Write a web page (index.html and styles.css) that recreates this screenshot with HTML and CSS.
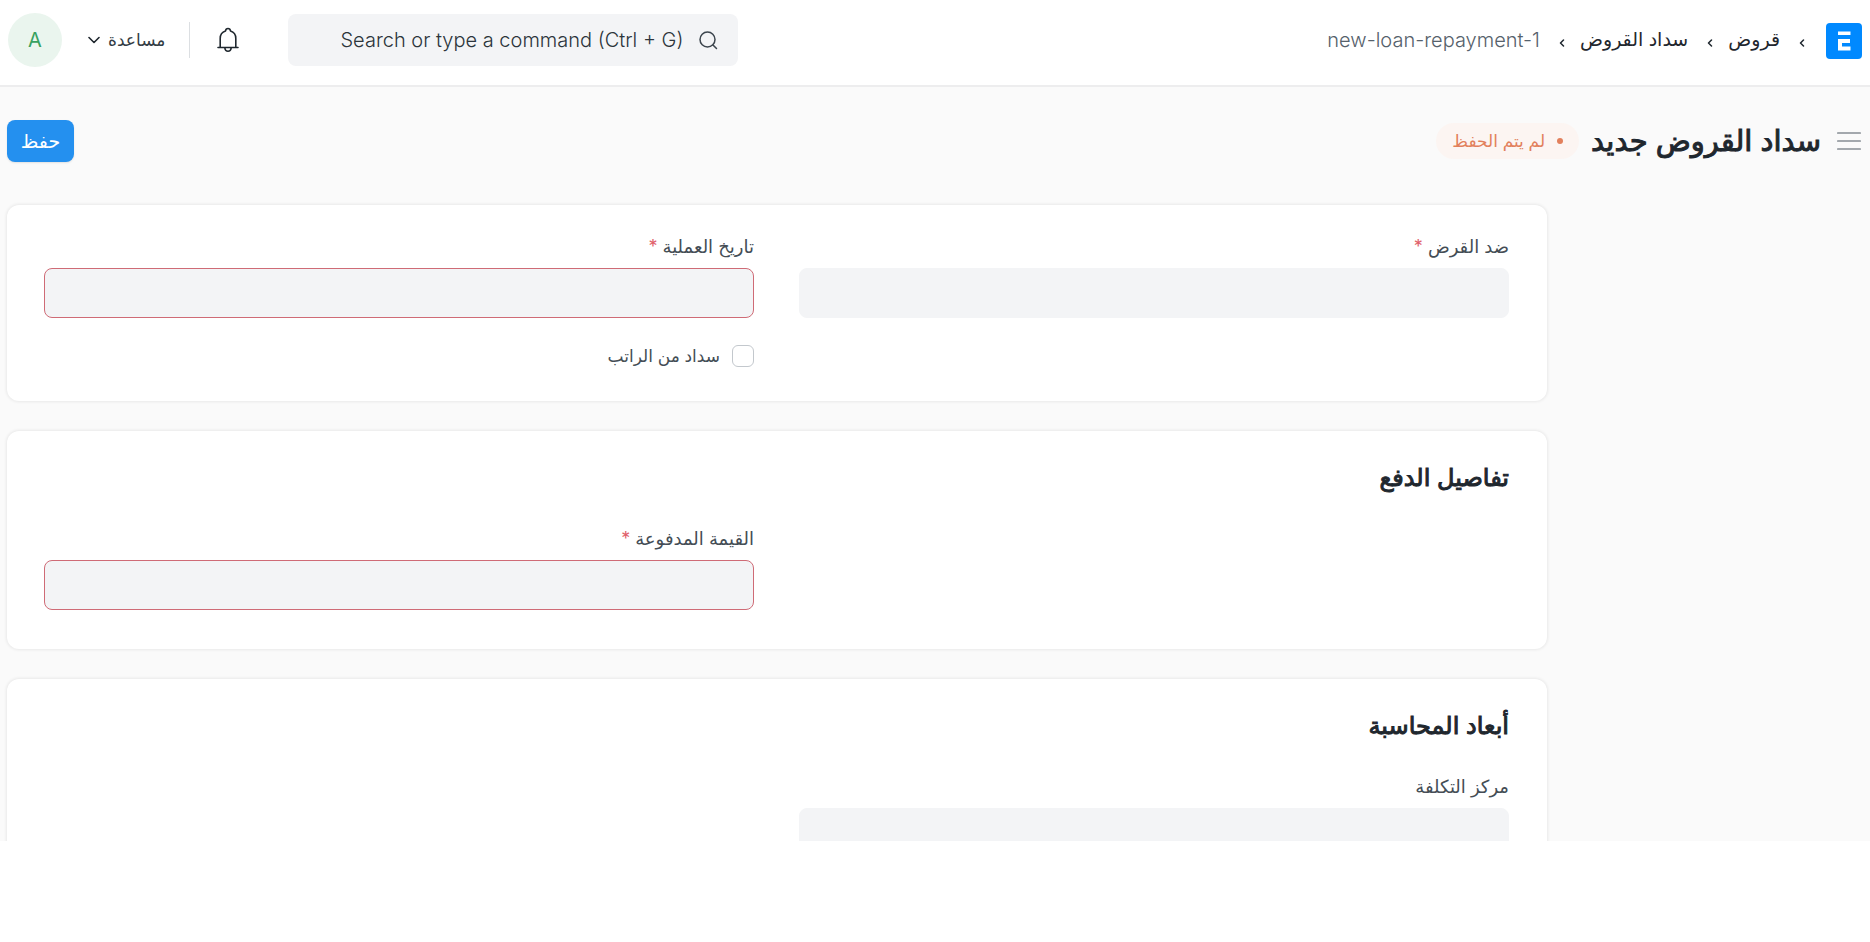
FILE: index.html
```
<!doctype html>
<html lang="ar" dir="rtl">

<head>
    <meta charset="utf-8">
    <meta name="viewport" content="width=device-width, initial-scale=1">
    <title>سداد القروض جديد</title>
    <link rel="stylesheet" href="styles.css">
</head>

<body>
    <div class="app">
        <header class="navbar">
            <a class="logo" href="#" aria-label="ERPNext">
                <svg width="36" height="36" viewBox="0 0 36 36">
                    <rect width="36" height="36" rx="4" fill="#0089ff" />
                    <path d="M12 8.500h12.500v3.500H12zM12 16h12v4h-8v3.500h8.500v4H12z" fill="#fff" />
                </svg>
            </a>
            <nav class="breadcrumbs">
                <svg class="sep" width="6" height="8" viewBox="0 0 6 8"><path d="M4.500 1L1.500 4l3 3" /></svg>
                <a href="#">قروض</a>
                <svg class="sep" width="6" height="8" viewBox="0 0 6 8"><path d="M4.500 1L1.500 4l3 3" /></svg>
                <a href="#">سداد القروض</a>
                <svg class="sep" width="6" height="8" viewBox="0 0 6 8"><path d="M4.500 1L1.500 4l3 3" /></svg>
                <a class="current" href="#" dir="ltr">new-loan-repayment-1</a>
            </nav>
            <div class="search">
                <svg width="20" height="20" viewBox="0 0 20 20">
                    <circle cx="9.500" cy="9.500" r="7.500" />
                    <path d="M15 15l3.500 3.500" />
                </svg>
                <input type="text" aria-label="Search" placeholder="Search or type a command (Ctrl + G)">
            </div>
            <button type="button" class="bell" aria-label="الإشعارات">
                <svg width="22" height="26" viewBox="0 0 22 26">
                    <path d="M1 20.500h20M3.200 20.500V11.500c0-4 2.200-6.600 5.300-7.500C8.700 2.400 9.600 1.500 11 1.500S13.300 2.400 13.500 4c3.100.9 5.300 3.500 5.300 7.500v9M7.800 21c.3 2.200 1.500 3.300 3.200 3.300s2.900-1.100 3.200-3.300" />
                </svg>
            </button>
            <span class="divider"></span>
            <button type="button" class="help">
                مساعدة
                <svg width="12" height="8" viewBox="0 0 12 8"><path d="M1 1.500l5 5 5-5" /></svg>
            </button>
            <a class="avatar" href="#">A</a>
        </header>

        <div class="page-head">
            <button type="button" class="menu-toggle" aria-label="القائمة">
                <svg width="24" height="20" viewBox="0 0 24 20"><path d="M1 2h22M1 10h22M1 18h22" /></svg>
            </button>
            <h1>سداد القروض جديد</h1>
            <span class="indicator">لم يتم الحفظ</span>
            <button type="submit" form="loanForm" class="btn-save">حفظ</button>
        </div>

        <main class="layout">
            <form id="loanForm" class="form">
                <section class="card">
                    <div class="columns">
                        <div class="column">
                            <label for="loan">ضد القرض <span class="reqd">*</span></label>
                            <input type="text" id="loan" class="control">
                        </div>
                        <div class="column">
                            <label for="date">تاريخ العملية <span class="reqd">*</span></label>
                            <input type="text" id="date" class="control has-error">
                            <div class="check">
                                <input type="checkbox" id="salary">
                                <label for="salary">سداد من الراتب</label>
                            </div>
                        </div>
                    </div>
                </section>

                <section class="card">
                    <h2>تفاصيل الدفع</h2>
                    <div class="columns">
                        <div class="column"></div>
                        <div class="column">
                            <label for="amount">القيمة المدفوعة <span class="reqd">*</span></label>
                            <input type="text" id="amount" class="control has-error">
                        </div>
                    </div>
                </section>

                <section class="card">
                    <h2>أبعاد المحاسبة</h2>
                    <div class="columns">
                        <div class="column">
                            <label for="cost">مركز التكلفة</label>
                            <input type="text" id="cost" class="control">
                        </div>
                        <div class="column"></div>
                    </div>
                </section>
            </form>
        </main>
    </div>
</body>

</html>
```
FILE: styles.css
```
* {
    box-sizing: border-box;
}

body {
    margin: 0;
    background: #fff;
    color: #1f272e;
    font-family: Inter, "DejaVu Sans", sans-serif;
    font-size: 17px;
}

button,
input {
    font-family: inherit;
}

button {
    border: none;
    background: none;
    padding: 0;
    cursor: pointer;
}

a {
    color: inherit;
    text-decoration: none;
}

svg {
    display: block;
    fill: none;
    stroke-linecap: round;
    stroke-linejoin: round;
}

.app {
    height: calc(100vh - 101px);
    overflow: hidden;
    background: #fafafa;
}

/* navbar */
.navbar {
    display: flex;
    align-items: center;
    height: 87px;
    padding: 0 8px 5px;
    background: #fff;
    border-bottom: 2px solid #ededee;
}

.logo {
    margin-top: 2px;
}

.breadcrumbs {
    display: flex;
    align-items: center;
    gap: 15px;
    margin-right: 21px;
    font-size: 19px;
    line-height: 24px;
    white-space: nowrap;
}

.breadcrumbs .current {
    font-size: 20px;
    font-weight: 300;
    color: #56616b;
}

.sep {
    stroke: #1f272e;
    stroke-width: 1.5;
    margin-top: 5px;
    margin-left: 4px;
}

.search {
    display: flex;
    align-items: center;
    gap: 15px;
    width: 450px;
    height: 52px;
    padding: 0 20px;
    margin-right: auto;
    background: #f3f4f6;
    border-radius: 8px;
}

.search svg {
    flex: none;
    stroke: #3c454d;
    stroke-width: 1.5;
}

.search input {
    flex: 1;
    min-width: 0;
    padding: 0;
    border: none;
    outline: none;
    background: none;
    font-size: 20px;
    font-weight: 300;
}

.search input::placeholder {
    color: #2c343b;
}

.bell {
    margin-right: 49px;
}

.bell svg {
    stroke: #1f272e;
    stroke-width: 1.6;
}

.divider {
    width: 1px;
    height: 36px;
    margin: 0 27px 0 24px;
    background: #dcdfe2;
}

.help {
    display: flex;
    align-items: center;
    gap: 8px;
    margin-left: 26px;
    color: #333c44;
    font-size: 17px;
}

.help svg {
    stroke: #1f272e;
    stroke-width: 1.6;
}

.avatar {
    width: 54px;
    height: 54px;
    border-radius: 50%;
    background: #eaf5ee;
    color: #38a160;
    font-size: 20px;
    line-height: 54px;
    text-align: center;
}

/* page title */
.page-head {
    display: flex;
    align-items: center;
    height: 108px;
    padding: 0 9px 0 7px;
}

.menu-toggle svg {
    stroke: #a3a8ad;
    stroke-width: 2.2;
}

.page-head h1 {
    margin: 0 16px 0 12px;
    font-size: 29px;
    line-height: 36px;
    font-weight: 400;
    -webkit-text-stroke: 1px;
}

.indicator {
    display: flex;
    align-items: center;
    gap: 12px;
    height: 36px;
    padding: 0 16px;
    border-radius: 18px;
    background: #fcf5f2;
    color: #e2805c;
    font-size: 17px;
}

.indicator::before {
    content: "";
    width: 6px;
    height: 6px;
    border-radius: 50%;
    background: #e2805c;
}

.btn-save {
    width: 67px;
    height: 42px;
    margin-right: auto;
    border-radius: 8px;
    background: #2490ef;
    color: #fff;
    font-size: 19px;
    box-shadow: 0 1px 2px rgba(0, 0, 0, 0.1);
}

/* form */
.layout {
    padding: 10px 323px 0 7px;
}

.card {
    margin-bottom: 30px;
    padding: 30px 38px 33px 37px;
    background: #fff;
    border-radius: 12px;
    box-shadow: 0 0 3px 1px rgba(0, 0, 0, 0.07);
}

.card h2 {
    margin: 0 0 32px;
    font-size: 24px;
    line-height: 34px;
    font-weight: 400;
    -webkit-text-stroke: 1px;
}

.columns {
    display: grid;
    grid-template-columns: 1fr 1fr;
    gap: 45px;
}

.column label {
    display: block;
    margin-bottom: 9px;
    color: #444d55;
    font-size: 18px;
    line-height: 24px;
}

.reqd {
    color: #e0606a;
}

.control {
    display: block;
    width: 100%;
    height: 50px;
    margin-bottom: 6px;
    padding: 0 14px;
    border: 1px solid #f3f4f6;
    border-radius: 8px;
    background: #f3f4f6;
    font-size: 18px;
}

.control.has-error {
    border-color: #cf6b76;
}

.check {
    display: flex;
    align-items: center;
    gap: 12px;
    margin-top: 26px;
}

.check input {
    appearance: none;
    width: 22px;
    height: 22px;
    margin: 0;
    border: 1px solid #c3c8cd;
    border-radius: 6px;
    background: #fff;
}

.column .check label {
    margin: 0;
    font-size: 17px;
}
```
